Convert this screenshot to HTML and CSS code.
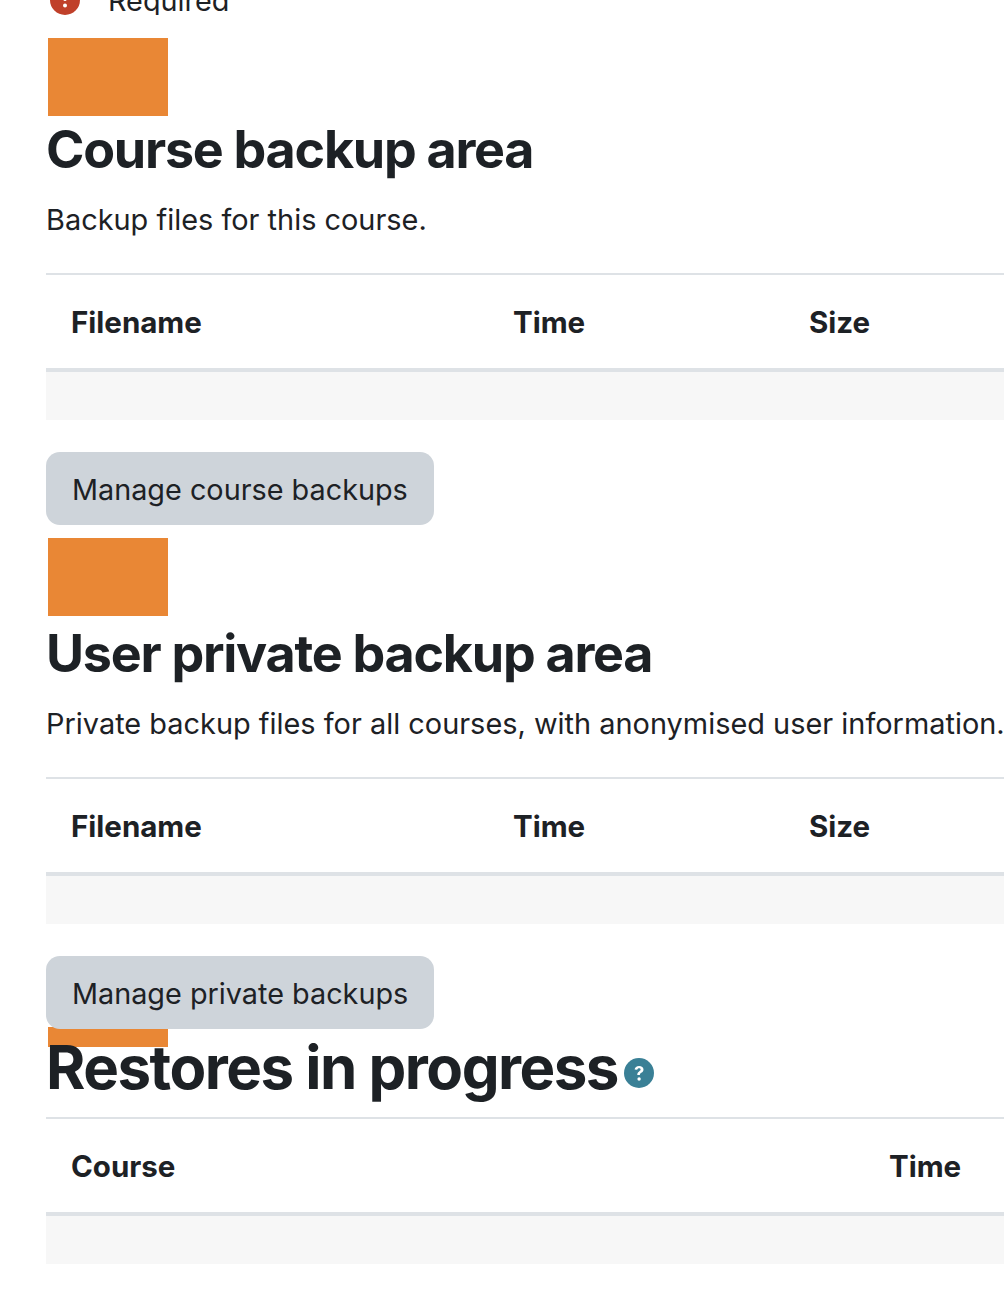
FILE: index.html
```html
<!DOCTYPE html>
<html lang="en">
<head>
    <meta charset="UTF-8">
    <meta name="viewport" content="width=device-width, initial-scale=1.0">
    <title>Restore course</title>
    <link rel="stylesheet" href="styles.css">
</head>
<body>
    <div class="required-row">
        <svg class="required-icon" viewBox="0 0 30 30" aria-hidden="true">
            <circle cx="15" cy="15" r="15" fill="#c0402a"/>
            <rect x="13.4" y="5" width="3.2" height="11" rx="1.4" fill="#fff"/>
            <circle cx="15" cy="20.6" r="2" fill="#fff"/>
        </svg>
        <span class="required-text">Required</span>
    </div>

    <div class="container">
        <div class="section section-course">
            <div class="placeholder"></div>
            <h2>Course backup area</h2>
            <p class="desc">Backup files for this course.</p>
            <table class="files">
                <thead>
                    <tr><th class="col-name">Filename</th><th class="col-time">Time</th><th>Size</th></tr>
                </thead>
                <tbody>
                    <tr><td colspan="3"></td></tr>
                </tbody>
            </table>
            <button class="btn">Manage course backups</button>
        </div>

        <div class="section section-private">
            <div class="placeholder"></div>
            <h2>User private backup area</h2>
            <p class="desc">Private backup files for all courses, with anonymised user information.</p>
            <table class="files">
                <thead>
                    <tr><th class="col-name">Filename</th><th class="col-time">Time</th><th>Size</th></tr>
                </thead>
                <tbody>
                    <tr><td colspan="3"></td></tr>
                </tbody>
            </table>
            <button class="btn">Manage private backups</button>
        </div>

        <div class="section">
            <div class="placeholder placeholder-short"></div>
            <h2 class="heading-restores">Restores in progress<svg class="help-icon" viewBox="0 0 30 30" aria-hidden="true">
                <circle cx="15" cy="15" r="15" fill="#3a8096"/>
                <path d="M10.6 11.6c.3-2.4 2-3.7 4.5-3.7s4.4 1.4 4.4 3.6c0 1.6-.8 2.5-2.2 3.3-1.1.7-1.4 1.1-1.4 2.3h-2.6c-.1-1.9.4-2.8 1.8-3.7 1-.6 1.5-1.1 1.5-1.8 0-.9-.6-1.4-1.6-1.4s-1.6.6-1.8 1.6z" fill="#fff"/>
                <circle cx="15.1" cy="21" r="1.7" fill="#fff"/>
            </svg></h2>
            <table class="files">
                <thead>
                    <tr><th class="col-course">Course</th><th>Time</th></tr>
                </thead>
                <tbody>
                    <tr><td colspan="2"></td></tr>
                </tbody>
            </table>
        </div>
    </div>
</body>
</html>
```

FILE: styles.css
```css
html, body {
    overflow: hidden;
}

body {
    font-family: Inter, "Liberation Sans", sans-serif;
    font-size: 28.8px;
    line-height: 1.5;
    color: #1d2125;
    margin: 0;
    padding: 0;
    background-color: white;
    height: 1310px;
}

.required-row {
    height: 15px;
    padding-left: 50px;
    display: flex;
    align-items: flex-end;
    gap: 28px;
    overflow: hidden;
}

.required-icon {
    width: 30px;
    height: 30px;
    flex: none;
}

.required-text {
    flex: none;
    line-height: 30px;
    margin-bottom: -1px;
}

.container {
    padding-left: 46px;
    padding-top: 23px;
}

.section-course {
    margin-bottom: 13px;
}

.section-private {
    margin-bottom: -2px;
}

.section-private .placeholder {
    margin-bottom: 4px;
}

.placeholder {
    width: 120px;
    height: 78px;
    margin-left: 2px;
    background-color: #e98735;
}

.placeholder-short {
    height: 20px;
}

h2 {
    margin: 0;
    font-size: 52px;
    letter-spacing: -1.25px;
    font-weight: 700;
    line-height: 68px;
    white-space: nowrap;
}

.heading-restores {
    margin-top: -14px;
    font-size: 60px;
    letter-spacing: -1.5px;
}

.help-icon {
    width: 30px;
    height: 30px;
    margin-left: 6px;
    vertical-align: 1px;
}

.desc {
    margin: 0;
    margin-top: 14px;
    height: 43px;
    font-size: 28.92px;
    line-height: 43px;
    white-space: nowrap;
}

table {
    width: 1020px;
    margin-top: 32px;
    table-layout: fixed;
    border-collapse: collapse;
    background: white;
}

.heading-restores + table {
    margin-top: 16px;
}

th {
    padding: 1px 25px 0;
    height: 92px;
    text-align: left;
    font-size: 29.5px;
    font-weight: 700;
    border-top: 2px solid #dee2e6;
    border-bottom: 4px solid #dee2e6;
}

td {
    height: 48px;
    padding: 0;
    background-color: #f7f7f7;
}

.col-name {
    width: 392px;
}

.col-time {
    width: 246px;
}

.col-course {
    width: 768px;
}

.btn {
    display: block;
    margin-top: 32px;
    height: 73px;
    padding: 1px 26px 0;
    border: none;
    border-radius: 14px;
    background-color: #ced4da;
    color: #1d2125;
    font-family: inherit;
    font-size: 28.8px;
    position: relative;
}
```
